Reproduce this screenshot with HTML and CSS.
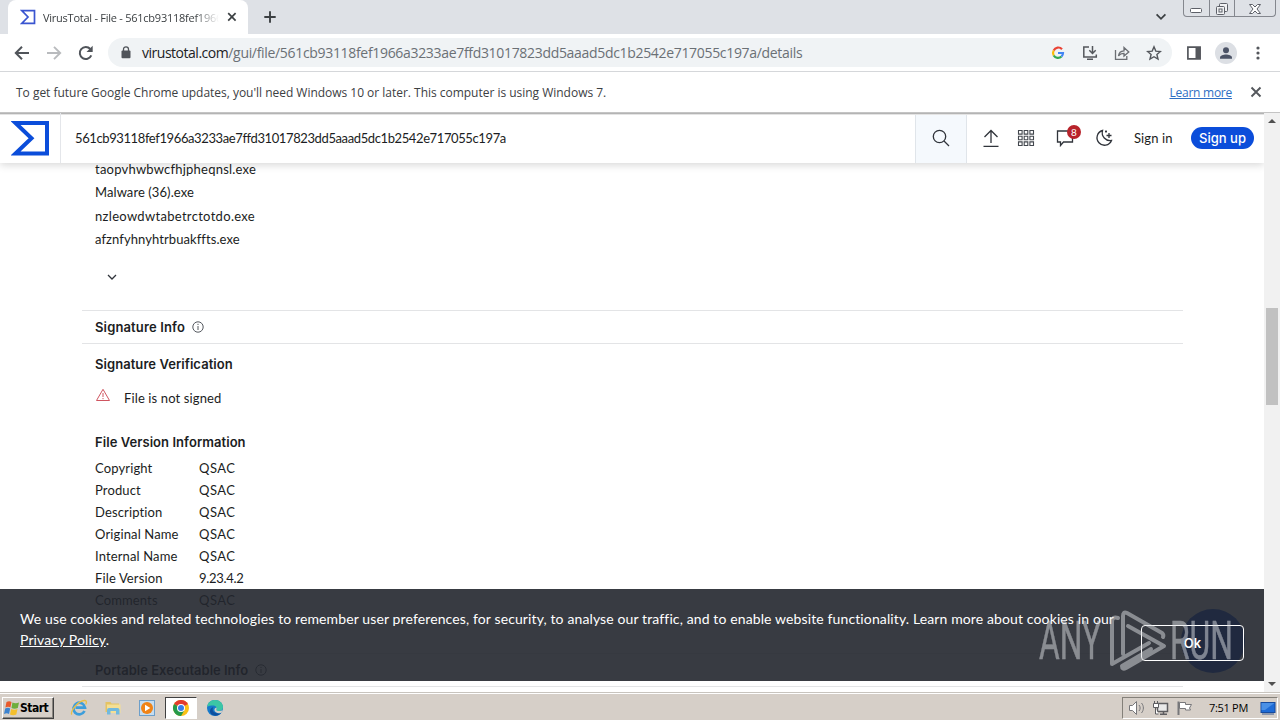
FILE: index.html
```html
<!DOCTYPE html>
<html lang="en">
<head>
    <meta charset="UTF-8">
    <meta name="viewport" content="width=device-width, initial-scale=1.0">
    <title>VirusTotal - File</title>
    <link rel="stylesheet" href="styles.css">
</head>
<body>
    <!-- Tabs -->
    <div class="tabstrip">
        <div class="tab">
            <svg class="favicon" width="16" height="16" viewBox="0 0 16 16"><path d="M1.8 1.7h12.7v12.6H1.8L8 8z" fill="none" stroke="#3a55d0" stroke-width="1.7"/></svg>
            <span class="tab-title">VirusTotal - File - 561cb93118fef1966</span>
            <svg width="10" height="10" viewBox="0 0 10 10"><path d="M1.2 1.2l7.4 7.4M8.6 1.2L1.2 8.6" stroke="#3c4043" stroke-width="1.7"/></svg>
        </div>
        <svg class="new-tab" width="14" height="14" viewBox="0 0 14 14"><path d="M7 1.3v11.4M1.3 7h11.4" stroke="#3c4043" stroke-width="1.9"/></svg>
        <svg class="tab-search" width="12" height="8" viewBox="0 0 12 8"><path d="M1.6 1.4L6 5.8l4.4-4.4" fill="none" stroke="#3c4043" stroke-width="1.8"/></svg>
        <div class="window-buttons">
            <span class="win-btn"><svg width="13" height="6" viewBox="0 0 13 6"><rect x=".5" y=".5" width="11" height="4" rx="1" fill="#fff" stroke="#5d6068"/></svg></span>
            <span class="win-btn"><svg width="14" height="14" viewBox="0 0 14 14"><g fill="#f1f2f4" stroke="#5d6068"><rect x="4.5" y="1.5" width="8" height="8" rx="1"/><rect x="1.5" y="4.5" width="8" height="8" rx="1"/><rect x="4" y="7" width="3" height="3"/></g></svg></span>
            <span class="win-btn wide"><svg width="14" height="12" viewBox="0 0 14 12"><path d="M1.5 1.5h3L7 4l2.500-2.500h3L9 6l3.500 4.500h-3L7 8l-2.500 2.500h-3L5 6z" fill="#fff" stroke="#5d6068"/></svg></span>
        </div>
    </div>

    <!-- Toolbar -->
    <div class="toolbar">
        <svg width="16" height="16" viewBox="0 0 16 16"><path d="M15 8H2.500M8 1.800L1.800 8 8 14.200" fill="none" stroke="#50545a" stroke-width="2"/></svg>
        <svg width="16" height="16" viewBox="0 0 16 16"><path d="M1 8h12.500M8 1.800L14.200 8 8 14.200" fill="none" stroke="#b9bbbe" stroke-width="1.9"/></svg>
        <svg width="16" height="16" viewBox="0 0 16 16"><path d="M13.300 10.400A6 6 0 1 1 12.300 4" fill="none" stroke="#50545a" stroke-width="2"/><path d="M14.700.8v6.200H8.500z" fill="#50545a"/></svg>
        <div class="omnibox">
            <svg width="10" height="13" viewBox="0 0 10 13"><rect x="0.500" y="4.500" width="9" height="7.700" rx="1" fill="#50545a"/><path d="M2.500 5V3.300a2.500 2.500 0 0 1 5 0V5" fill="none" stroke="#50545a" stroke-width="1.300"/></svg>
            <span class="url"><span class="host">virustotal.com</span><span class="path">/gui/file/561cb93118fef1966a3233ae7ffd31017823dd5aaad5dc1b2542e717055c197a/details</span></span>
            <div class="omnibox-icons">
                <svg width="16" height="16" viewBox="0 0 16 16" fill="none" stroke-width="2.200"><path d="M12 4.200A5 5 0 0 0 3.700 5.500" stroke="#ea4335"/><path d="M3.700 5.500a5 5 0 0 0 0 5" stroke="#fbbc05"/><path d="M3.700 10.500A5 5 0 0 0 11.500 11.500" stroke="#34a853"/><path d="M11.500 11.500A5 5 0 0 0 13 8H8" stroke="#4285f4"/></svg>
                <svg width="16" height="16" viewBox="0 0 16 16" fill="none" stroke="#54575c" stroke-width="1.500"><path d="M7 2H1.800v10h12.500V9.500M5 14.200h6"/><path d="M10.500 1v7M7.300 5.300l3.200 3.200 3.200-3.200"/></svg>
                <svg width="16" height="16" viewBox="0 0 16 16" fill="none" stroke="#6b6e73" stroke-width="1.300"><path d="M1.500 5v9.300h11.300V11"/><path d="M4.500 11c.3-3.500 2-5 5.500-5.200V2.500L14.800 7 10 11V8.300c-2.500 0-4.200.7-5.500 2.700z"/></svg>
                <svg width="16" height="16" viewBox="0 0 16 16" fill="none" stroke="#54575c" stroke-width="1.400"><path d="M8 1.800l1.800 4.300 4.600.4-3.500 3 1.100 4.600L8 11.700l-4 2.400 1.100-4.600-3.500-3 4.600-.4z"/></svg>
            </div>
        </div>
        <svg class="side-panel" width="16" height="16" viewBox="0 0 16 16"><path d="M1.900 2.200h12.200v11.600H1.900z" fill="none" stroke="#54575c" stroke-width="1.700"/><path d="M9.500 2h4.600v12H9.500z" fill="#54575c"/></svg>
        <svg class="avatar" width="22" height="22" viewBox="0 0 22 22"><circle cx="11" cy="11" r="11" fill="#dcdfe4"/><circle cx="11" cy="8.200" r="3" fill="#4b5366"/><path d="M5 16.700v-1.200c0-2 3.500-3 6-3s6 1 6 3v1.200z" fill="#4b5366"/></svg>
        <svg class="kebab" width="4" height="14" viewBox="0 0 4 14" fill="#54575c"><circle cx="2" cy="2" r="1.600"/><circle cx="2" cy="7" r="1.600"/><circle cx="2" cy="12" r="1.600"/></svg>
    </div>

    <div class="infobar">
        <span class="infobar-text">To get future Google Chrome updates, you'll need Windows 10 or later. This computer is using Windows 7.</span>
        <a class="infobar-link">Learn more</a>
        <svg width="12" height="12" viewBox="0 0 12 12"><path d="M1.500 1.500l9 9M10.500 1.500l-9 9" stroke="#54575c" stroke-width="1.900"/></svg>
    </div>

    <div class="viewport">
        <div class="page">
            <header class="header">
                <div class="logo">
                    <svg width="38" height="35" viewBox="0 0 38 35"><path d="M4.500 2H36v30.500H4.500L20.500 17.300z" fill="none" stroke="#0b4dda" stroke-width="4"/></svg>
                </div>
                <div class="search-text">561cb93118fef1966a3233ae7ffd31017823dd5aaad5dc1b2542e717055c197a</div>
                <div class="search-btn">
                    <svg width="18" height="18" viewBox="0 0 18 18" fill="none" stroke="#30343b" stroke-width="1.300"><circle cx="7.500" cy="7.500" r="6.200"/><path d="M12 12l5 5"/></svg>
                </div>
                <nav class="nav">
                    <svg width="18" height="18" viewBox="0 0 18 18" fill="none" stroke="#30343b" stroke-width="1.300"><path d="M9 14V1.500M2.500 8L9 1.500 15.500 8M1.500 17.300h15"/></svg>
                    <svg width="18" height="18" viewBox="0 0 18 18" fill="none" stroke="#43474e" stroke-width="1.100"><path d="M1.500 1.500h3.600v3.600H1.500zM7.200 1.500h3.600v3.600H7.200zM12.900 1.500h3.600v3.600h-3.600zM1.500 7.200h3.600v3.600H1.500zM7.200 7.200h3.600v3.600H7.200zM12.900 7.200h3.600v3.600h-3.600zM1.500 12.900h3.600v3.600H1.500zM7.200 12.900h3.600v3.600H7.200zM12.900 12.900h3.600v3.600h-3.600z"/></svg>
                    <span class="comments">
                        <svg width="18" height="18" viewBox="0 0 18 18" fill="none" stroke="#30343b" stroke-width="1.300"><path d="M1.500 2h15v11H7.500L4.500 16.500V13h-3z"/></svg>
                        <span class="badge">8</span>
                    </span>
                    <svg width="18" height="18" viewBox="0 0 18 18" fill="none" stroke="#30343b" stroke-width="1.300"><path d="M7.500 1.500A7.500 7.500 0 1 0 16.500 11.500 8 8 0 0 1 7.500 1.500z"/><path d="M14 4v5M11.500 6.500h5M11 1.500v2M10 2.500h2"/></svg>
                    <span class="sign-in">Sign in</span>
                    <span class="sign-up">Sign up</span>
                </nav>
            </header>

            <main class="content">
                <ul class="names">
                    <li>taopvhwbwcfhjpheqnsl.exe</li>
                    <li class="normal">Malware (36).exe</li>
                    <li class="spaced">nzleowdwtabetrctotdo.exe</li>
                    <li class="normal">afznfyhnyhtrbuakffts.exe</li>
                </ul>
                <div class="more">
                    <svg width="10" height="6" viewBox="0 0 10 6"><path d="M1 1l4 4 4-4" fill="none" stroke="#30343b" stroke-width="1.300"/></svg>
                </div>

                <h2 class="section-title">Signature Info
                    <svg width="12" height="12" viewBox="0 0 12 12" fill="none" stroke="#54585f"><circle cx="6" cy="6" r="5.200"/><path d="M6 5v4M6 2.800v1.200"/></svg>
                </h2>
                <h3 class="sub-title">Signature Verification</h3>
                <div class="unsigned">
                    <svg width="16" height="14" viewBox="0 0 16 14" fill="none" stroke="#cf5560"><path d="M8 1.300l6.500 11.200h-13z"/><path d="M8 5v4M8 10v1.200"/></svg>
                    <span>File is not signed</span>
                </div>
                <h3 class="sub-title version-title">File Version Information</h3>
                <dl class="info">
                    <dt>Copyright</dt><dd>QSAC</dd>
                    <dt>Product</dt><dd>QSAC</dd>
                    <dt>Description</dt><dd>QSAC</dd>
                    <dt>Original Name</dt><dd>QSAC</dd>
                    <dt>Internal Name</dt><dd>QSAC</dd>
                    <dt>File Version</dt><dd class="digits">9.23.4.2</dd>
                    <dt>Comments</dt><dd>QSAC</dd>
                </dl>
                <h2 class="section-title portable">Portable Executable Info
                    <svg width="12" height="12" viewBox="0 0 12 12" fill="none" stroke="#54585f"><circle cx="6" cy="6" r="5.200"/><path d="M6 5v4M6 2.800v1.200"/></svg>
                </h2>
            </main>

            <div class="fab"></div>
            <div class="cookies">
                <p>We use cookies and related technologies to remember user preferences, for security, to analyse our traffic, and to enable website functionality. Learn more about cookies in our <a>Privacy Policy</a>.</p>
                <span class="ok">Ok</span>
            </div>
        </div>
        <div class="scrollbar">
            <span class="arrow up"></span>
            <span class="thumb"></span>
            <span class="arrow down"></span>
        </div>
    </div>

    <!-- Taskbar -->
    <div class="taskbar">
        <div class="start">
            <svg width="16" height="16" viewBox="0 0 16 16"><path d="M2.500 2c2-1.200 3.500-1 5 0L6.400 7.500c-1.500-1-3-1-5 0z" fill="#e8592b"/><path d="M8.400 2.400c2 1 4.600 1 6.600 0L13.800 8c-2 1-4.500 1-6.300 0z" fill="#6dae3c"/><path d="M1.200 8.500c2-1 3.500-1 5 0L5 14c-1.500-1-3-1-5 0z" fill="#3d83cf"/><path d="M7.200 9c1.800 1 4.400 1 6.300 0l-1.200 5.500c-2 1-4.500 1-6.300 0z" fill="#f4bf2c"/></svg>
            Start
        </div>
        <div class="apps">
            <span class="app">
                <svg width="18" height="18" viewBox="0 0 18 18" fill="none"><path d="M14.500 12A5.800 5.800 0 1 1 15 8.700H5.500" stroke="#3d9edb" stroke-width="2.700"/><path d="M2 15.500C-1 14 8 1 15 1.500c2 .2 1.500 2.500.7 4" stroke="#e9bf45" stroke-width="1.300"/></svg>
            </span>
            <span class="app">
                <svg width="18" height="18" viewBox="0 0 18 18"><path d="M1.500 3h5l1 1.500H15V13H1.500z" fill="#e4c364"/><path d="M3 5.500h13.500V14H3z" fill="#f5df94"/><path d="M3 15.500V11q0-2 2-2h8.500q2 0 2 2v4.500H12V12H6.500v3.500z" fill="#72b9de"/></svg>
            </span>
            <span class="app">
                <svg width="18" height="18" viewBox="0 0 18 18"><rect x="1.500" y="1.500" width="15" height="15" fill="#c6ddf0" stroke="#6d9fca"/><circle cx="9" cy="9" r="6" fill="#f08316"/><path d="M7 5.700L12.300 9 7 12.300z" fill="#fff"/></svg>
            </span>
            <span class="app active">
                <svg width="18" height="18" viewBox="0 0 18 18"><circle cx="9" cy="9" r="8" fill="#fbc116"/><path d="M9 9L2.070 5A8 8 0 0 1 15.930 5z" fill="#e33b2e"/><path d="M9 9L2.070 5A8 8 0 0 0 9 17l3-5z" fill="#269a4b"/><circle cx="9" cy="9" r="4" fill="#fff"/><circle cx="9" cy="9" r="3" fill="#377ee8"/></svg>
            </span>
            <span class="app">
                <svg width="18" height="18" viewBox="0 0 18 18"><circle cx="9" cy="9" r="8" fill="#1679ca"/><path d="M1.200 7.500C2 3 5.500 1 9 1c5 0 8 3.500 8 7 0 2.500-2 4-4.500 4-2 0-2.800-.7-2-2 .6-1.200-.5-3.500-3.500-3.500-2.500 0-4.500.500-5.800 1z" fill="#3cc6a5"/><path d="M7.500 8c-2.500 3 .5 7.500 7.500 6.300-3 3.500-8.500 3-10.500-.3-1.200-2.500 0-5 3-6z" fill="#0d4f9e"/><path d="M10.500 8.500c.6 1.200-1 2.500.7 3.200 2 .8 4 .3 5.500-.7l-1.200 2.800c-4 1.200-6.500-.8-7-2.300-.3-1.500.5-2.600 2-3z" fill="#d4d0c8"/></svg>
            </span>
        </div>
        <div class="tray">
            <svg width="18" height="16" viewBox="0 0 18 16" fill="none" stroke="#77777a"><path d="M1.500 5.500h3l4-4v13l-4-4h-3z" fill="#fff"/><path d="M11 5c1.500 2 1.500 4 0 6M13.500 3c2.500 3 2.500 7 0 10"/></svg>
            <svg width="18" height="16" viewBox="0 0 18 16" fill="none" stroke="#5d5d60"><path d="M5.500 3.500h10v8h-10z" fill="#e9e9e9" stroke-width="1.500"/><path d="M8 14.200h7M11.500 12v2" stroke-width="1.500"/><path d="M1.500 3.500h5v4h-5zM2.500 1v2M5.500 1v2M3.500 8v6h3" fill="#fff"/></svg>
            <svg width="18" height="16" viewBox="0 0 18 16"><path d="M2.500 1.500v13.500" stroke="#77777a" stroke-width="2"/><path d="M3.500 2.500h6v2h6l-2 3.500 1 2h-5V8.500h-6z" fill="#fff" stroke="#77777a"/></svg>
            <span class="clock">7:51 PM</span>
            <svg width="16" height="14" viewBox="0 0 16 14"><rect x="1" y="1.500" width="14" height="10" fill="#1e6bd6" stroke="#174a9c"/><path d="M1.500 2h13L5 9H1.500z" fill="#4a90e6"/><path d="M2 13h12" stroke="#3e5f94"/></svg>
        </div>
    </div>

    <!-- Recording watermark -->
    <svg class="watermark" width="200" height="64" viewBox="0 0 200 64">
        <text x="3" y="51" textLength="62" lengthAdjust="spacingAndGlyphs">ANY</text>
        <text x="134" y="51" textLength="63" lengthAdjust="spacingAndGlyphs">RUN</text>
        <path class="mark" d="M82 10q-6-2-6 4v42l37-21M87 46V8q0-5 4-3l35 20q2 2 1 4M92 18l36 20-38 22q-4 2-4-2l29-17"/>
    </svg>
</body>
</html>
```
FILE: styles.css
```css
* {
    box-sizing: border-box;
}

body {
    margin: 0;
    width: 1280px;
    height: 720px;
    overflow: hidden;
    display: flex;
    flex-direction: column;
    position: relative;
    background: #fff;
    font-family: 'Open Sans', sans-serif;
}

svg {
    display: block;
    flex-shrink: 0;
}

/* Browser window */
.tabstrip {
    display: flex;
    align-items: center;
    height: 34px;
    flex-shrink: 0;
    background: #dee1e6;
    padding: 0 4px 0 8px;
}

.tab {
    display: flex;
    align-items: center;
    width: 240px;
    height: 34px;
    padding: 0 11px 0 12px;
    background: #fff;
    border-radius: 8px 8px 0 0;
}

.tab-title {
    width: 176px;
    margin: 0 8px 0 7px;
    overflow: hidden;
    white-space: nowrap;
    font-size: 11px;
    letter-spacing: -0.25px;
    color: #3c4043;
    -webkit-mask-image: linear-gradient(90deg, #000 86%, transparent);
    mask-image: linear-gradient(90deg, #000 86%, transparent);
}

.new-tab {
    margin-left: 15px;
}

.tab-search {
    margin-left: auto;
    margin-right: 16px;
}

.window-buttons {
    display: flex;
    align-self: flex-start;
    height: 17px;
    border: 1px solid #84878e;
    border-top: none;
    border-radius: 0 0 4px 4px;
}

.win-btn {
    display: flex;
    align-items: center;
    justify-content: center;
    width: 25px;
    padding-top: 1px;
}

.win-btn + .win-btn {
    border-left: 1px solid #84878e;
}

.win-btn:first-child {
    padding-top: 5px;
}

.win-btn.wide {
    width: 41px;
}

.toolbar {
    display: flex;
    align-items: center;
    gap: 16px;
    height: 38px;
    flex-shrink: 0;
    padding: 0 20px 0 14px;
    border-bottom: 1px solid #d5d7da;
}

.omnibox {
    flex: 1;
    display: flex;
    align-items: center;
    height: 29px;
    margin-left: -2px;
    padding: 0 10px 0 13px;
    border-radius: 15px;
    background: #f0f3f5;
}

.url {
    margin-left: 11px;
    font-size: 14px;
    white-space: nowrap;
    color: #6b7075;
}

.host {
    color: #202124;
    letter-spacing: -0.48px;
}

.path {
    letter-spacing: -0.32px;
}

.omnibox-icons {
    display: flex;
    gap: 16px;
    margin-left: auto;
}

.side-panel {
    margin-left: -2px;
}

.avatar {
    margin-left: -3px;
}

.kebab {
    margin-left: 3px;
}

.infobar {
    display: flex;
    align-items: center;
    height: 41px;
    flex-shrink: 0;
    padding: 0 18px 0 16px;
    border-bottom: 1px solid #c4c4c4;
    font-size: 12px;
    color: #3c4043;
}

.infobar-text {
    letter-spacing: -0.02px;
}

.infobar-link {
    margin-left: auto;
    margin-right: 18px;
    letter-spacing: -0.25px;
    color: #2f6fc4;
    text-decoration: underline;
}

/* Web page */
.viewport {
    flex: 1;
    display: flex;
    min-height: 0;
}

.page {
    position: relative;
    width: 1264px;
    overflow: hidden;
    font-family: Lato, sans-serif;
    font-size: 13px;
    color: #1b1d22;
    letter-spacing: 0.13px;
}

.header {
    position: relative;
    z-index: 1;
    display: flex;
    height: 50px;
    background: #fff;
    box-shadow: 0 2px 8px rgba(0, 0, 0, 0.16), inset 0 1px #b4b4b4, inset 0 2px #e4e4e4;
}

.logo {
    width: 61px;
    padding: 8px 0 0 11px;
    border-right: 1px solid #e4e6ea;
}

.search-text {
    flex: 1;
    padding-left: 14px;
    line-height: 51px;
    letter-spacing: -0.39px;
}

.search-btn {
    display: flex;
    align-items: center;
    justify-content: center;
    width: 52px;
    margin-top: 2px;
    padding-bottom: 2px;
    background: #f5f9fd;
    border-left: 1px solid #e0e5ea;
    border-right: 1px solid #e0e5ea;
}

.nav {
    display: flex;
    align-items: center;
    padding: 0 10px 0 15px;
}

.nav > svg:first-child {
    margin-right: 17px;
}

.comments {
    position: relative;
    margin: 0 21px;
}

.badge {
    position: absolute;
    top: -4px;
    left: 11px;
    width: 14px;
    height: 14px;
    border-radius: 50%;
    background: #b8232b;
    color: #fff;
    font-size: 10px;
    line-height: 14px;
    letter-spacing: 0;
    text-align: center;
}

.sign-in {
    margin-left: 21px;
    width: 40px;
    white-space: nowrap;
}

.sign-up {
    width: 63px;
    height: 22px;
    margin-left: 17px;
    border-radius: 11px;
    background: #0b4dda;
    color: #fff;
    font-family: Inter, sans-serif;
    font-weight: 500;
    letter-spacing: 0;
    line-height: 22px;
    text-align: center;
}

.content {
    width: 1101px;
    margin-left: 82px;
}

.names {
    margin: -5px 0 0;
    padding: 0 0 0 13px;
    list-style: none;
    line-height: 23.4px;
    letter-spacing: 0.22px;
}

.names .normal {
    letter-spacing: 0.08px;
}

.names .spaced {
    letter-spacing: 0.31px;
}

.more {
    padding: 22px 25px 30px;
}

.section-title {
    display: flex;
    align-items: center;
    gap: 7px;
    height: 34px;
    margin: 0;
    padding-left: 13px;
    border-top: 1px solid #e3e4e6;
    border-bottom: 1px solid #e3e4e6;
}

.section-title,
.sub-title {
    font-family: Inter, sans-serif;
    font-size: 13px;
    font-weight: 600;
    letter-spacing: 0.06px;
}

.section-title:not(.portable) {
    letter-spacing: 0.14px;
}

.sub-title {
    margin: 10px 0 0 13px;
    line-height: 20px;
}

.unsigned {
    display: flex;
    gap: 13px;
    height: 44px;
    padding: 14px 13px 0;
    line-height: 21px;
}

.version-title {
    margin-top: 14px;
}

.info {
    display: grid;
    grid-template-columns: 104px 1fr;
    margin: 5px 0 0 13px;
    line-height: 22px;
}

.info dd {
    margin: 0;
    letter-spacing: 0.5px;
}

.info .digits {
    letter-spacing: -0.3px;
}

.portable {
    margin-top: 42px;
    letter-spacing: 0;
}

.fab {
    position: absolute;
    right: 19px;
    top: 496px;
    width: 64px;
    height: 64px;
    border-radius: 50%;
    background: #0b4dda;
}

.cookies {
    position: absolute;
    left: 0;
    right: 0;
    top: 476px;
    display: flex;
    align-items: center;
    height: 92px;
    padding: 0 20px;
    background: rgba(34, 38, 45, 0.9);
    color: #fff;
}

.cookies p {
    flex: 1;
    margin: 0;
    padding-bottom: 12px;
    font-size: 14px;
    line-height: 21px;
    letter-spacing: 0.12px;
}

.cookies a {
    text-decoration: underline;
}

.ok {
    width: 103px;
    height: 36px;
    margin-top: 16px;
    border: 1px solid #fff;
    border-radius: 4px;
    font-family: Inter, sans-serif;
    font-weight: 600;
    line-height: 34px;
    text-align: center;
}

.scrollbar {
    display: flex;
    flex-direction: column;
    align-items: center;
    width: 16px;
    background: #f1f1f1;
}

.arrow {
    border: 4px solid transparent;
}

.arrow.up {
    margin-top: 2px;
    border-bottom-color: #505050;
}

.arrow.down {
    margin-top: auto;
    margin-bottom: 2px;
    border-top-color: #505050;
}

.thumb {
    width: 12px;
    height: 97px;
    margin-top: 185px;
    background: #c1c1c1;
}

/* Windows taskbar */
.taskbar {
    display: flex;
    align-items: center;
    height: 28px;
    flex-shrink: 0;
    padding: 2px 2px 0;
    background: #d6cfc8;
    border-top: 1px solid #c8c4be;
    box-shadow: inset 0 1px #fff;
}

.start {
    display: flex;
    align-items: center;
    gap: 0;
    width: 52px;
    height: 22px;
    padding-left: 1px;
    border: 1px solid #fff;
    border-right-color: #404040;
    border-bottom-color: #404040;
    box-shadow: inset -1px -1px #8b8781;
    font-family: 'DejaVu Sans Condensed', 'DejaVu Sans', sans-serif;
    font-size: 12px;
    font-weight: bold;
    letter-spacing: -0.5px;
    color: #000;
}

.apps {
    display: flex;
    margin-left: 9px;
    gap: 2px;
}

.app {
    display: flex;
    align-items: center;
    justify-content: center;
    width: 32px;
    height: 22px;
}

.app.active {
    background: #fff;
    border: 1px solid #404040;
    border-right-color: #fff;
    border-bottom-color: #fff;
}

.tray {
    display: flex;
    align-items: center;
    gap: 6px;
    width: 156px;
    height: 22px;
    margin-left: auto;
    padding-left: 5px;
    border: 1px solid #848079;
    border-right-color: #fff;
    border-bottom-color: #fff;
}

.clock {
    width: 40px;
    margin: 0 5px 0 9px;
    font-size: 11px;
    letter-spacing: -0.3px;
    white-space: nowrap;
    color: #000;
}

.watermark {
    position: absolute;
    left: 1036px;
    top: 608px;
    opacity: 0.5;
    fill: #dcdee2;
    stroke: #dcdee2;
}

.watermark text {
    font-family: Roboto, sans-serif;
    font-size: 53px;
    stroke-width: 0.5;
}

.watermark .mark {
    fill: none;
    stroke-width: 4;
    stroke-linejoin: round;
    stroke-linecap: round;
}
```
